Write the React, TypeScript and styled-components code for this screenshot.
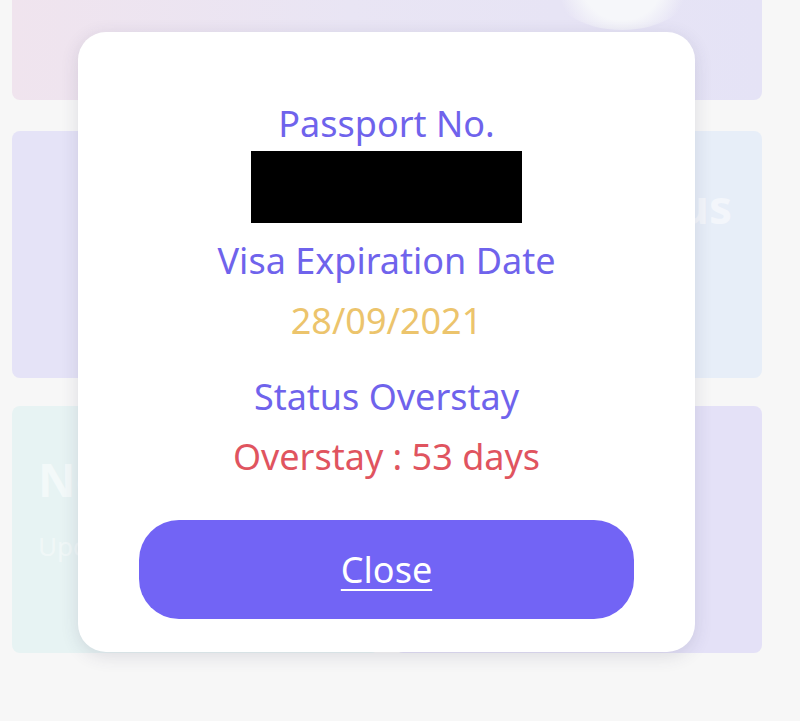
import React from "react"
import styled, { createGlobalStyle } from "styled-components"

const GlobalStyle = createGlobalStyle`
  html, body {
    margin: 0;
    padding: 0;
    background: #f7f7f7;
    font-family: "Noto Sans", "Open Sans", sans-serif;
  }
`

type Tint = "lavender" | "sky" | "mint" | "violet"

const tints: Record<Tint, string> = {
  lavender: "#e5e3f7",
  sky: "#e7eef8",
  mint: "#e7f3f3",
  violet: "#e4e1f7",
}

const App: React.FC = () => {
  return (
    <S.Page>
      <GlobalStyle />
      <S.Content>
        <S.Banner>
          <S.BannerBadge />
        </S.Banner>
        <S.Grid>
          <S.Card tint="lavender" />
          <S.Card tint="sky">
            <S.CardTitle align="right">Status</S.CardTitle>
          </S.Card>
          <S.Card tint="mint">
            <S.CardTitle align="left">News</S.CardTitle>
            <S.CardSub>Update</S.CardSub>
          </S.Card>
          <S.Card tint="violet" />
        </S.Grid>
      </S.Content>

      <S.Overlay>
        <S.Modal>
          <S.Label>Passport No.</S.Label>
          <S.Redacted />
          <S.Label>Visa Expiration Date</S.Label>
          <S.Value tone="date">28/09/2021</S.Value>
          <S.Label spaced>Status Overstay</S.Label>
          <S.Value tone="danger">Overstay : 53 days</S.Value>
          <S.CloseButton type="button">Close</S.CloseButton>
        </S.Modal>
      </S.Overlay>
    </S.Page>
  )
}

export default App

const S = {
  Page: styled.div`
    position: relative;
    width: 800px;
    height: 721px;
    overflow: hidden;
    background: #f7f7f7;
  `,
  Content: styled.div`
    display: flex;
    flex-direction: column;
    gap: 31px;
    padding: 0 38px 0 12px;
  `,
  Banner: styled.div`
    position: relative;
    height: 100px;
    border-radius: 0 0 8px 8px;
    background: linear-gradient(90deg, #f0e4ee 0%, #e9e5f4 45%, #e5e3f6 100%);
    overflow: hidden;
  `,
  BannerBadge: styled.div`
    position: absolute;
    left: 535px;
    top: -70px;
    width: 150px;
    height: 100px;
    border-radius: 50%;
    background: radial-gradient(circle, #f6f7fa 45%, rgba(246, 247, 250, 0) 72%);
  `,
  Grid: styled.div`
    display: grid;
    grid-template-columns: 1fr 1fr;
    grid-auto-rows: 247px;
    column-gap: 16px;
    row-gap: 28px;
  `,
  Card: styled.div<{ tint: Tint }>`
    display: flex;
    flex-direction: column;
    padding: 40px 26px;
    border-radius: 8px;
    background: ${(p) => tints[p.tint]};
  `,
  CardTitle: styled.div<{ align: "left" | "right" }>`
    text-align: ${(p) => p.align};
    font-size: 46px;
    font-weight: 700;
    color: rgba(255, 255, 255, 0.5);
    line-height: 1;
    margin-top: ${(p) => (p.align === "right" ? "12px" : "10px")};
    margin-right: ${(p) => (p.align === "right" ? "4px" : "0")};
  `,
  CardSub: styled.div`
    margin-top: 26px;
    font-size: 26px;
    color: rgba(255, 255, 255, 0.4);
  `,
  Overlay: styled.div`
    position: absolute;
    inset: 0;
    padding: 32px 0 0 78px;
  `,
  Modal: styled.div`
    width: 617px;
    box-sizing: border-box;
    display: flex;
    flex-direction: column;
    align-items: center;
    padding: 71px 61px 33px;
    background: #ffffff;
    border-radius: 28px;
    box-shadow: 0 4px 18px rgba(60, 60, 90, 0.14);
  `,
  Label: styled.div<{ spaced?: boolean }>`
    font-size: 36px;
    line-height: 42px;
    color: #6f63ec;
    margin-top: ${(p) => (p.spaced ? "25px" : "0")};
  `,
  Redacted: styled.div`
    width: 271px;
    height: 72px;
    margin: 6px 0 17px;
    background: #000000;
  `,
  Value: styled.div<{ tone: "date" | "danger" }>`
    font-size: 36px;
    line-height: 60px;
    margin-top: 9px;
    color: ${(p) => (p.tone === "date" ? "#ecc46c" : "#e0545f")};
  `,
  CloseButton: styled.button`
    width: 100%;
    height: 99px;
    margin-top: 33px;
    border: none;
    border-radius: 40px;
    background: #7264f5;
    color: #ffffff;
    font-family: inherit;
    font-size: 36px;
    text-decoration: underline;
    text-underline-offset: 6px;
    text-decoration-thickness: 2px;
    cursor: pointer;
  `,
}
